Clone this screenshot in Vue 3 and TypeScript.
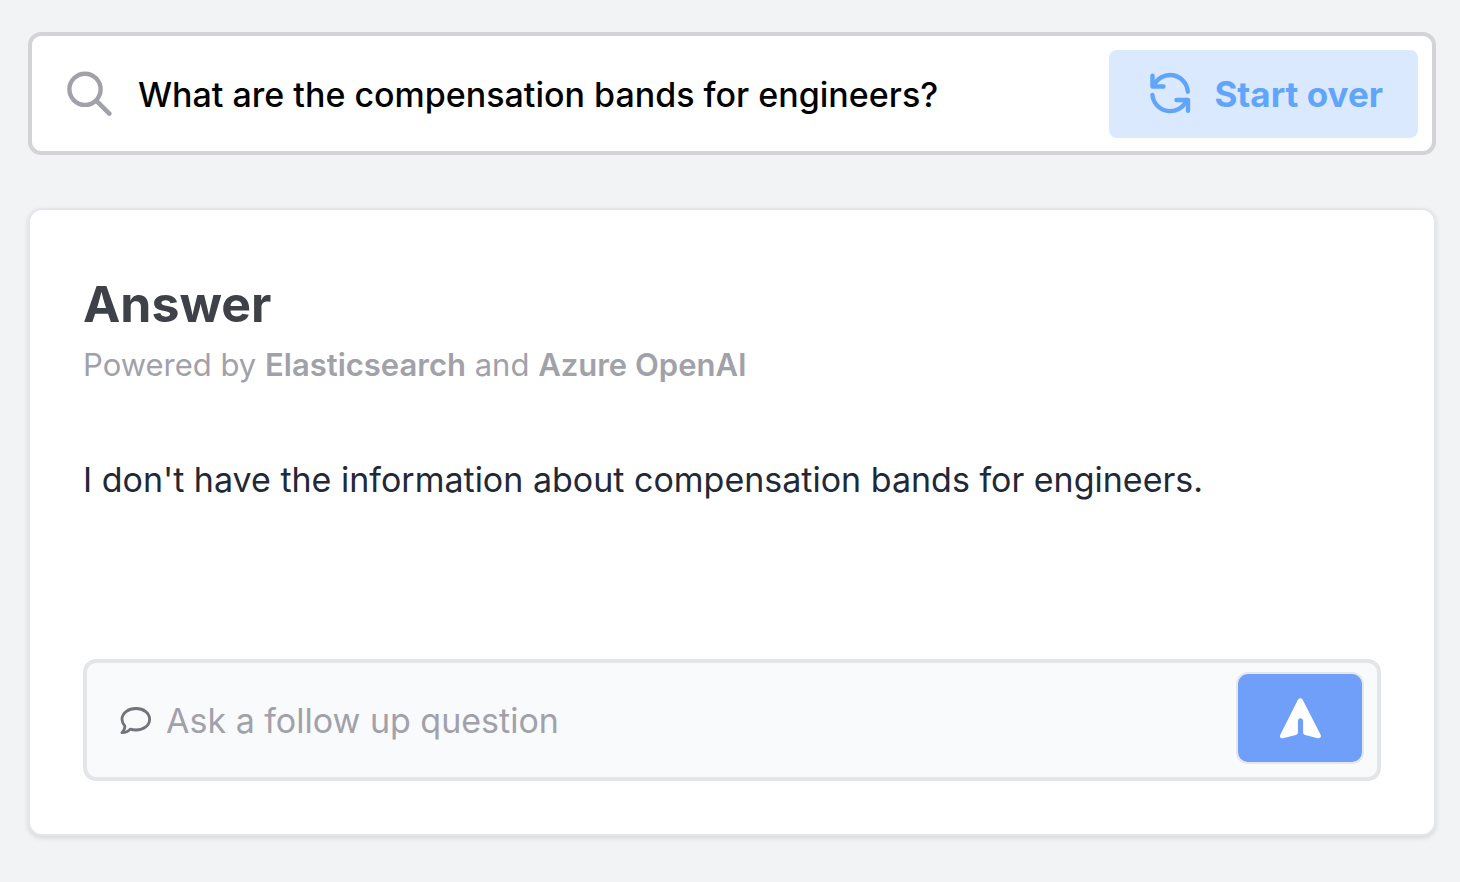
<script setup lang="ts">
import { ref } from 'vue'

const question = ref('What are the compensation bands for engineers?')
const followUp = ref('')
const answer = "I don't have the information about compensation bands for engineers."

function startOver(): void {
  question.value = ''
  followUp.value = ''
}
</script>

<template>
  <main class="page">
    <form class="search" @submit.prevent>
      <label class="search-label" for="question" aria-label="Search">
        <svg width="46" height="46" viewBox="0 0 46 46" fill="none" stroke="currentColor" stroke-linecap="round">
          <circle cx="19" cy="18.3" r="15.6" stroke-width="4.4" />
          <path d="M30.5 29.8 L43.3 42.6" stroke-width="4.6" />
        </svg>
      </label>
      <input id="question" v-model="question" class="search-input" type="text" />
      <button class="start-over" type="button" @click="startOver">
        <svg width="44" height="44" viewBox="0 0 44 44" fill="none" stroke="currentColor" stroke-width="4.4" stroke-linecap="round" stroke-linejoin="round">
          <path d="M4.5 3.8 V14.5 H15.5" />
          <path d="M5.6 14 A17.8 17.8 0 0 1 39.8 19.7" />
          <path d="M4.4 22.9 A17.8 17.8 0 0 0 38.6 28.1" />
          <path d="M40 38.8 V28 H28.5" />
        </svg>
        <span>Start over</span>
      </button>
    </form>

    <section class="card">
      <header class="card-header">
        <h1 class="title">Answer</h1>
        <p class="powered">Powered by <strong>Elasticsearch</strong> and <strong>Azure OpenAI</strong></p>
      </header>
      <p class="answer">{{ answer }}</p>
      <form class="follow" @submit.prevent>
        <label class="follow-label" for="follow-up" aria-label="Follow up question">
          <svg width="32" height="32" viewBox="0 0 32 32" fill="none" stroke="currentColor" stroke-width="2.8" stroke-linejoin="round">
            <path d="M16 4.5 C23.8 4.5 29.6 9 29.6 15.2 C29.6 21.5 23.8 26 16 26 C14 26 12 25.7 10.3 25.1 C8.3 27.4 5 28.8 1.9 28.7 C3.5 27.2 4.8 25 4.9 22.2 C3.1 20.2 2 17.7 2 15.2 C2 9 8.2 4.5 16 4.5 Z" />
          </svg>
        </label>
        <input id="follow-up" v-model="followUp" class="follow-input" type="text" placeholder="Ask a follow up question" />
        <button class="send" type="submit" aria-label="Send">
          <svg width="42" height="42" viewBox="0 0 42 42" fill="currentColor">
            <path d="M18.9 2.8 C19.8 0.6 22.8 0.6 23.7 2.8 L41.6 37.8 C42.5 40 40.9 41.8 38.7 41.2 L26.2 38 C24.8 37.6 24.1 37 24.1 35.6 V24 C24.1 20.4 18.9 20.4 18.9 24 V35.6 C18.9 37 18.2 37.6 16.8 38 L3.9 41.2 C1.7 41.8 0.4 40 1.3 37.8 Z" />
          </svg>
        </button>
      </form>
    </section>
  </main>
</template>

<style>
body {
  margin: 0;
  background: #f2f3f5;
}
</style>

<style scoped>
.page {
  display: flex;
  flex-direction: column;
  gap: 53px;
  padding: 32px 24px 46px 28px;
  font-family: Inter, "Liberation Sans", sans-serif;
}

.search,
.follow {
  display: flex;
  align-items: center;
  border: 4px solid #d4d4d8;
  border-radius: 13px;
}

.search {
  padding: 14px 14px 13px 34px;
  background: #fff;
}

.search-label,
.follow-label {
  display: flex;
  flex: none;
}

.search-label {
  color: #a1a1aa;
}

input {
  flex: 1;
  min-width: 0;
  box-sizing: border-box;
  height: 60px;
  padding: 0;
  border: 0;
  outline: none;
  background: transparent;
  font-family: inherit;
  font-size: 34px;
}

.search-input {
  margin-left: 26px;
  color: #000;
  font-weight: 500;
}

button {
  display: flex;
  flex: none;
  align-items: center;
  justify-content: center;
  box-sizing: border-box;
  font-family: inherit;
  cursor: pointer;
}

.start-over {
  gap: 22px;
  height: 88px;
  padding: 0 35px 0 39px;
  border: 0;
  border-radius: 8px;
  background: #dbe9fe;
  color: #60a5fa;
  font-size: 35px;
  font-weight: 700;
}

.card {
  padding: 62px 53px 53px;
  border: 2px solid #e5e6ea;
  border-radius: 14px;
  background: #fff;
  box-shadow: 0 2px 5px rgba(0, 0, 0, 0.12);
}

.title {
  margin: 0;
  color: #3f4148;
  font-size: 50px;
  font-weight: 700;
  line-height: 64px;
}

.powered {
  margin: 9px 0 0;
  color: #a1a1aa;
  font-size: 31px;
  line-height: 40px;
}

.powered strong {
  font-weight: 600;
}

.answer {
  margin: 65px 0 0;
  color: #1f2937;
  font-size: 34px;
  line-height: 60px;
}

.follow {
  margin-top: 149px;
  padding: 9px 13px 13px 33px;
  border-color: #e4e5e9;
  background: #f9fafc;
}

.follow-label,
.follow-input {
  margin-top: 4px;
}

.follow-label {
  color: #70747b;
}

.follow-input {
  margin-left: 14px;
  color: #1f2937;
}

.follow-input::placeholder {
  color: #a1a1aa;
  opacity: 1;
}

.send {
  width: 128px;
  height: 92px;
  padding: 0;
  border: 2px solid #e5e7eb;
  border-radius: 12px;
  background: #6f9ff9;
  color: #fff;
}
</style>
